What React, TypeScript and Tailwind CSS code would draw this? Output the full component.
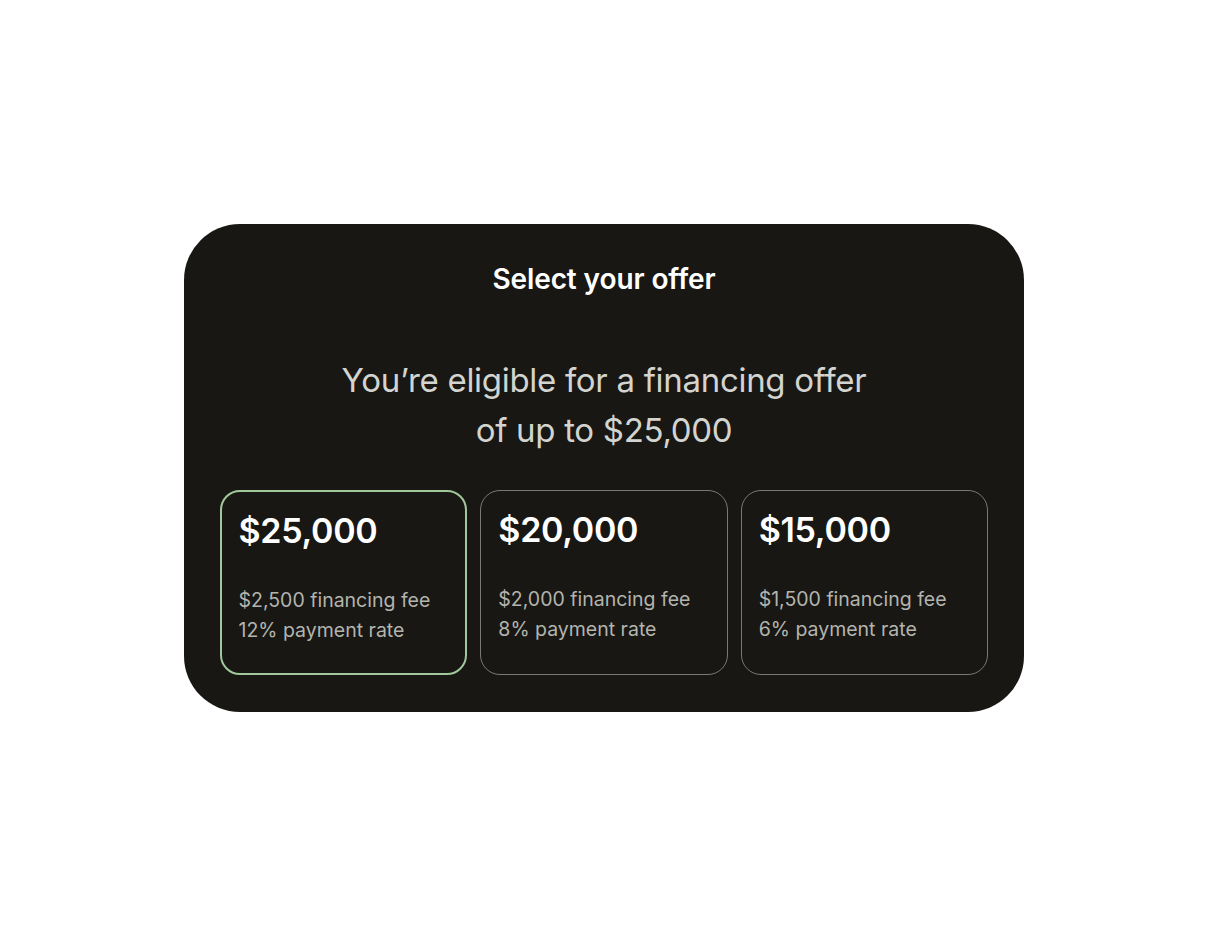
import React from "react";

const offers = [
  { amount: "$25,000", fee: "$2,500 financing fee", rate: "12% payment rate", selected: true },
  { amount: "$20,000", fee: "$2,000 financing fee", rate: "8% payment rate", selected: false },
  { amount: "$15,000", fee: "$1,500 financing fee", rate: "6% payment rate", selected: false },
];

export default function App() {
  return (
    <div className="min-h-[936px] w-full bg-white pt-[224px]" style={{ fontFamily: "Inter, 'Liberation Sans', sans-serif" }}>
      <div className="mx-auto flex h-[488px] w-[840px] flex-col rounded-[56px] bg-[#181713] px-[36px] pt-[37px] pb-[37px]">
        <h1 className="text-center text-[28px] font-semibold leading-[36px] tracking-[-0.1px] text-white">Select your offer</h1>
        <p className="mt-[58px] text-center text-[33px] font-normal leading-[50px] tracking-[-0.3px] text-[#d3d4cf]">
          You’re eligible for a financing offer
          <br />
          of up to $25,000
        </p>
        <div className="mt-[35px] grid grid-cols-3 gap-[13px]">
          {offers.map((o) => (
            <div
              key={o.amount}
              className={
                o.selected
                  ? "h-[185px] rounded-[20px] border-2 border-[#a0c89a] px-[16.5px] pt-[18.5px]"
                  : "h-[185px] rounded-[20px] border-[1.5px] border-[#7a7a74] px-[17px] pt-[19px]"
              }
            >
              <div className="text-[34px] font-semibold leading-[40px] tracking-[-0.3px] text-white">{o.amount}</div>
              <div className="mt-[34px] text-[19.5px] leading-[30px] text-[#b3b4ae]">
                <div>{o.fee}</div>
                <div>{o.rate}</div>
              </div>
            </div>
          ))}
        </div>
      </div>
    </div>
  );
}
